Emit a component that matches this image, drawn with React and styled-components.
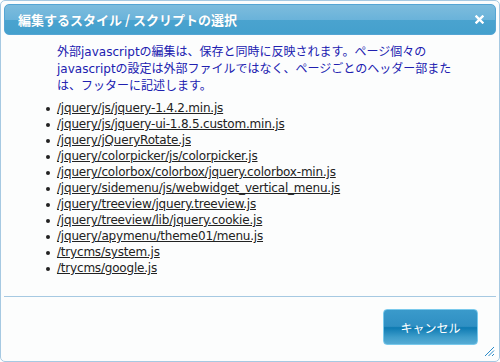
import styled, { createGlobalStyle } from "styled-components";

const scripts = [
    "/jquery/js/jquery-1.4.2.min.js",
    "/jquery/js/jquery-ui-1.8.5.custom.min.js",
    "/jquery/jQueryRotate.js",
    "/jquery/colorpicker/js/colorpicker.js",
    "/jquery/colorbox/colorbox/jquery.colorbox-min.js",
    "/jquery/sidemenu/js/webwidget_vertical_menu.js",
    "/jquery/treeview/jquery.treeview.js",
    "/jquery/treeview/lib/jquery.cookie.js",
    "/jquery/apymenu/theme01/menu.js",
    "/trycms/system.js",
    "/trycms/google.js",
]

export default function App(){

    return (
        <>
            <Global />
            <Dialog>
                <TitleBar>
                    <h1>編集するスタイル / スクリプトの選択</h1>
                    <Close>
                        <svg width="9" height="9" viewBox="0 0 9 9">
                            <path d="M1.5 1.5 L7.5 7.5 M7.5 1.5 L1.5 7.5" stroke="#fff" strokeWidth="2.4" strokeLinecap="square"/>
                        </svg>
                    </Close>
                </TitleBar>
                <Content>
                    <Intro>
                        外部javascriptの編集は、保存と同時に反映されます。ページ個々の<br/>
                        javascriptの設定は外部ファイルではなく、ページごとのヘッダー部また<br/>
                        は、フッターに記述します。
                    </Intro>
                    <List>
                        {scripts.map((s) => (
                            <li key={s}><a href="#">{s}</a></li>
                        ))}
                    </List>
                </Content>
                <Footer>
                    <Button>キャンセル</Button>
                    <Grip>
                        <svg width="11" height="11" viewBox="0 0 11 11">
                            <path d="M10 1 L1 10 M10 4.5 L4.5 10 M10 8 L8 10" stroke="#2a8ac8" strokeWidth="1"/>
                        </svg>
                    </Grip>
                </Footer>
            </Dialog>
        </>
    )
}

const Global = createGlobalStyle`
    body{
        margin: 0;
        background: #ffffff;
        font-family: "Noto Sans CJK JP", "DejaVu Sans", sans-serif;
    }
`

const Dialog = styled.div`
    width: 500px;
    height: 362px;
    box-sizing: border-box;
    border: 1px solid #a6c9e2;
    border-radius: 5px;
    padding: 3px;
    background-color: #fcfdfd;
    display: flex;
    flex-direction: column;
`
const TitleBar = styled.div`
    height: 31px;
    flex-shrink: 0;
    box-sizing: border-box;
    border: 1px solid #55a5d4;
    border-radius: 5px;
    background: linear-gradient(#7dbcdd 0%, #6ab3da 50%, #4aa3cf 51%, #44a0cd 100%);
    display: flex;
    align-items: center;
    justify-content: space-between;
    padding: 0 11px 0 13px;

    h1{
        margin: 0;
        font-size: 13px;
        font-weight: 700;
        color: #ffffff;
        font-family: "Noto Sans CJK JP", sans-serif;
        text-shadow: 0 0 1px rgba(0,0,0,0.1);
    }
`
const Close = styled.div`
    width: 9px;
    height: 9px;
    display: flex;
`
const Content = styled.div`
    flex: 1;
    padding: 9px 0 0 53px;
`
const Intro = styled.p`
    margin: 0;
    font-size: 12px;
    line-height: 17px;
    color: #2020b0;
    font-family: "DejaVu Sans", "Noto Sans CJK JP", sans-serif;
    white-space: nowrap;
`
const List = styled.ul`
    margin: 5px 0 0 0;
    padding: 0;
    list-style: none;

    li{
        position: relative;
        font-size: 12px;
        line-height: 16px;
        font-family: "DejaVu Sans", sans-serif;
        letter-spacing: -0.2px;
    }

    li::before{
        content: "";
        position: absolute;
        left: -11px;
        top: 7px;
        width: 4px;
        height: 4px;
        border-radius: 50%;
        background: #222;
    }

    a{
        color: #222222;
        text-decoration: underline;
    }
`
const Footer = styled.div`
    height: 62px;
    flex-shrink: 0;
    box-sizing: border-box;
    border-top: 1px solid #a6c9e2;
    display: flex;
    justify-content: flex-end;
    align-items: flex-start;
    position: relative;
    padding: 12px 18px 0 0;
`
const Button = styled.button`
    width: 95px;
    height: 36px;
    border: 1px solid #79c9ec;
    border-radius: 4px;
    background: linear-gradient(#3a9acb 0%, #2f8fc3 48%, #0d7ab2 52%, #3e9dca 80%, #56acd5 100%);
    color: #ffffff;
    font-size: 12px;
    font-family: "Noto Sans CJK JP", sans-serif;
    cursor: pointer;
`
const Grip = styled.div`
    position: absolute;
    right: 1px;
    bottom: 1px;
    width: 11px;
    height: 11px;
    display: flex;
`
